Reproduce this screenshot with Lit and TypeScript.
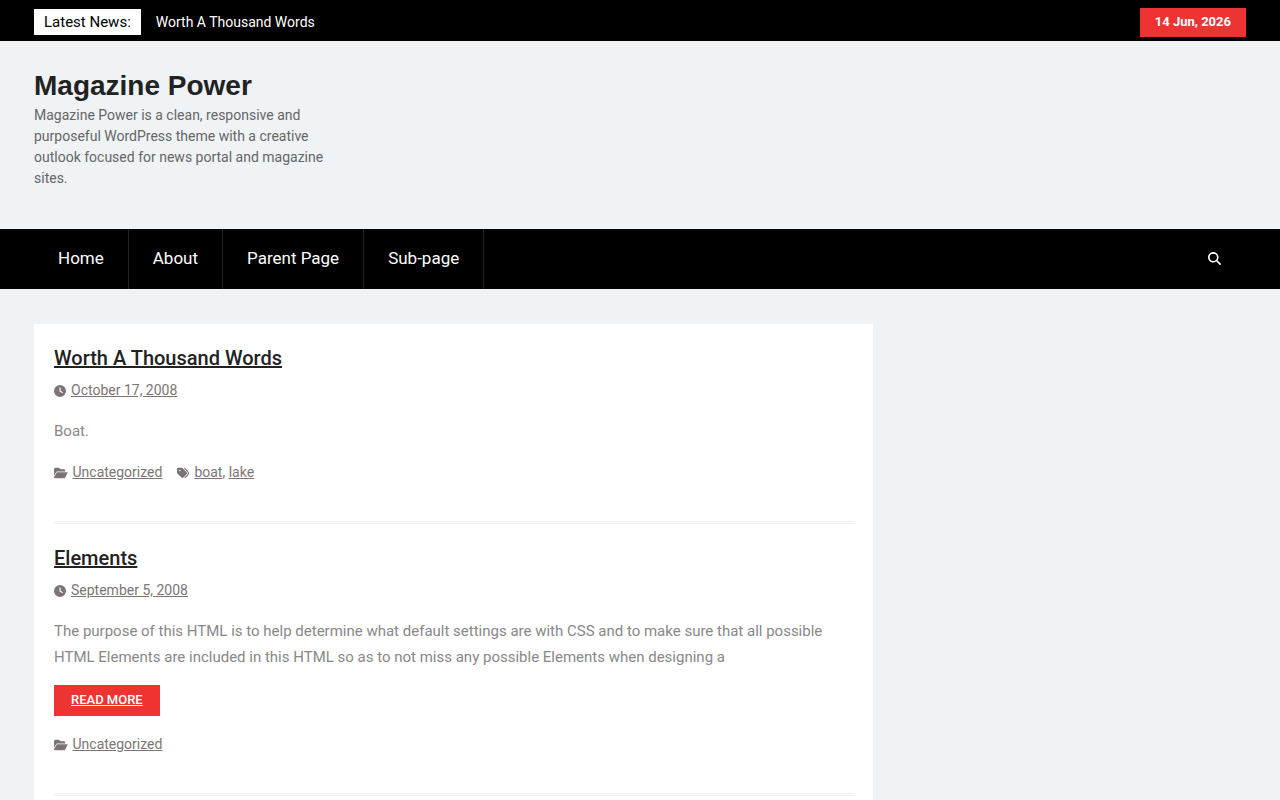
import { LitElement, html, css, svg, nothing } from "lit";
import { customElement, property } from "lit/decorators.js";

interface Post {
  title: string;
  date: string;
  excerpt: string;
  more: boolean;
  category: string;
  tags: string[];
}

const posts: Post[] = [
  {
    title: "Worth A Thousand Words",
    date: "October 17, 2008",
    excerpt: "Boat.",
    more: false,
    category: "Uncategorized",
    tags: ["boat", "lake"],
  },
  {
    title: "Elements",
    date: "September 5, 2008",
    excerpt:
      "The purpose of this HTML is to help determine what default settings are with CSS and to make sure that all possible HTML Elements are included in this HTML so as to not miss any possible Elements when designing a",
    more: true,
    category: "Uncategorized",
    tags: [],
  },
];

const icons: Record<string, { width: number; path: string }> = {
  search: {
    width: 512,
    path: "M416 208c0 45.9-14.9 88.3-40 122.7L502.6 457.4c12.5 12.5 12.5 32.8 0 45.3s-32.8 12.5-45.3 0L330.7 376c-34.4 25.2-76.8 40-122.7 40C93.1 416 0 322.9 0 208S93.1 0 208 0S416 93.1 416 208zM208 352a144 144 0 1 0 0-288 144 144 0 1 0 0 288z",
  },
  clock: {
    width: 512,
    path: "M256 0a256 256 0 1 1 0 512A256 256 0 1 1 256 0zM232 120V256c0 8 4 15.5 10.7 20l96 64c11 7.4 25.9 4.4 33.3-6.7s4.4-25.9-6.7-33.3L280 243.2V120c0-13.3-10.7-24-24-24s-24 10.7-24 24z",
  },
  folder: {
    width: 576,
    path: "M88.7 223.8L0 375.8V96C0 60.7 28.7 32 64 32H181.5c17 0 33.3 6.7 45.3 18.7l26.5 26.5c12 12 28.3 18.7 45.3 18.7H416c35.3 0 64 28.7 64 64v32H144c-22.8 0-43.8 12.1-55.3 31.8zm27.6 16.1C122.1 230 132.6 224 144 224H544c11.5 0 22 6.1 27.7 16.1s5.7 22.2-.1 32.1l-112 192C453.9 474 443.4 480 432 480H32c-11.5 0-22-6.1-27.7-16.1s-5.7-22.2 .1-32.1l112-192z",
  },
  tags: {
    width: 512,
    path: "M345 39.1L472.8 168.4c52.4 53 52.4 138.2 0 191.2L360.8 472.9c-9.3 9.4-24.5 9.5-33.9 .2s-9.5-24.5-.2-33.9L438.6 325.9c33.9-34.3 33.9-89.4 0-123.7L310.9 72.9c-9.3-9.4-9.2-24.6 .2-33.9s24.6-9.2 33.9 .2zM0 229.5V80C0 53.5 21.5 32 48 32H197.5c17 0 33.3 6.7 45.3 18.7l168 168c25 25 25 65.5 0 90.5L277.3 442.7c-25 25-65.5 25-90.5 0l-168-168C6.7 262.7 0 246.5 0 229.5zM144 144a32 32 0 1 0 -64 0 32 32 0 1 0 64 0z",
  },
};

const icon = (name: string) => html`<svg
  class="icon"
  viewBox="0 0 ${icons[name].width} 512"
  aria-hidden="true"
>
  ${svg`<path d=${icons[name].path}></path>`}
</svg>`;

@customElement("post-entry")
export class PostEntry extends LitElement {
  @property({ attribute: false }) post!: Post;

  static styles = css`
    :host {
      display: block;
    }
    .entry {
      padding: 20px 0 37px;
      border-bottom: 3px double #eeeeee;
    }
    .title {
      margin: 0 0 6px;
      font-size: 20px;
      line-height: 28px;
      font-weight: 500;
    }
    .title a {
      color: #222222;
    }
    .meta {
      display: flex;
      align-items: center;
      gap: 15px;
      font-size: 14px;
      line-height: 24px;
      color: #7c7474;
    }
    .meta a {
      color: inherit;
    }
    .item {
      display: flex;
      align-items: center;
      gap: 5px;
    }
    .icon {
      display: block;
      height: 12px;
      margin-top: 2px;
      fill: currentColor;
    }
    .excerpt {
      margin: 16px 0 15px;
      font-size: 15px;
      line-height: 26px;
      color: #888888;
    }
    .more {
      display: inline-block;
      margin-bottom: 15px;
      padding: 5px 17px 6px;
      background: #ee3333;
      color: #ffffff;
      font-size: 13px;
      line-height: 20px;
      font-weight: 500;
      text-transform: uppercase;
    }
    .foot {
      padding-top: 1px;
    }
  `;

  render() {
    const p = this.post;
    return html`
      <article class="entry">
        <h2 class="title"><a href="#">${p.title}</a></h2>
        <div class="meta">
          <span class="item">${icon("clock")}<a href="#">${p.date}</a></span>
        </div>
        <p class="excerpt">${p.excerpt}</p>
        ${p.more ? html`<a class="more" href="#">Read More</a>` : nothing}
        <footer class="meta foot">
          <span class="item">${icon("folder")}<a href="#">${p.category}</a></span>
          ${p.tags.length
            ? html`<span class="item"
                >${icon("tags")}<span
                  >${p.tags.map((t, i) => html`${i ? ", " : ""}<a href="#">${t}</a>`)}</span
                ></span
              >`
            : nothing}
        </footer>
      </article>
    `;
  }
}

@customElement("app-root")
export class AppRoot extends LitElement {
  static styles = css`
    :host {
      display: block;
      min-height: 100vh;
      background: #eff3f6;
      font-family: Roboto, "Liberation Sans", sans-serif;
      color: #666666;
    }
    .wrap {
      box-sizing: border-box;
      max-width: 1280px;
      margin: 0 auto;
      padding: 0 34px;
      display: flex;
    }
    .top,
    .nav {
      background: #000000;
    }
    .top .wrap {
      align-items: center;
      padding-top: 8px;
      padding-bottom: 4px;
    }
    .ticker {
      display: flex;
      align-items: center;
      gap: 15px;
      padding-bottom: 1px;
    }
    .label {
      padding: 3px 10px;
      background: #ffffff;
      color: #000000;
      font-size: 15px;
      line-height: 20px;
    }
    .news {
      color: #ffffff;
      font-size: 14px;
      line-height: 20px;
      text-decoration: none;
    }
    .date {
      margin-left: auto;
      padding: 4px 15px 5px;
      background: #ee3333;
      color: #ffffff;
      font-size: 13px;
      line-height: 20px;
      font-weight: 700;
    }
    .brand {
      width: 300px;
      padding: 28px 0 40px;
    }
    .name {
      margin: 0 0 2px;
      font-family: "Liberation Sans", sans-serif;
      font-size: 28px;
      line-height: 34px;
      font-weight: 700;
    }
    .name a {
      color: #222222;
      text-decoration: none;
    }
    .tagline {
      margin: 0;
      font-size: 14px;
      line-height: 21px;
    }
    .menu {
      display: flex;
      flex-wrap: wrap;
      margin: 0;
      padding: 0;
      list-style: none;
    }
    .menu a {
      display: block;
      padding: 17px 24px 19px;
      border-right: 1px solid #222222;
      color: #ffffff;
      font-size: 17px;
      line-height: 24px;
      text-decoration: none;
    }
    .search {
      margin-left: auto;
      padding: 0 25px 1px;
      border: 0;
      background: none;
      color: #ffffff;
      cursor: pointer;
    }
    .icon {
      display: block;
      width: 13px;
      height: 13px;
      fill: currentColor;
    }
    .content {
      padding-top: 35px;
    }
    .posts {
      box-sizing: border-box;
      flex: 0 0 calc(70% - 9px);
      padding: 0 20px 20px;
      background: #ffffff;
    }
  `;

  render() {
    return html`
      <div class="top">
        <div class="wrap">
          <div class="ticker">
            <span class="label">Latest News:</span>
            <a class="news" href="#">Worth A Thousand Words</a>
          </div>
          <time class="date" datetime="2026-06-14">14 Jun, 2026</time>
        </div>
      </div>
      <header class="wrap">
        <div class="brand">
          <h1 class="name"><a href="#">Magazine Power</a></h1>
          <p class="tagline">
            Magazine Power is a clean, responsive and purposeful WordPress theme with a
            creative outlook focused for news portal and magazine sites.
          </p>
        </div>
      </header>
      <nav class="nav" aria-label="Primary">
        <div class="wrap">
          <ul class="menu">
            ${["Home", "About", "Parent Page", "Sub-page"].map(
              (t) => html`<li><a href="#">${t}</a></li>`
            )}
          </ul>
          <button class="search" aria-label="Search">${icon("search")}</button>
        </div>
      </nav>
      <div class="wrap content">
        <main class="posts">
          ${posts.map((p) => html`<post-entry .post=${p}></post-entry>`)}
        </main>
      </div>
    `;
  }
}
